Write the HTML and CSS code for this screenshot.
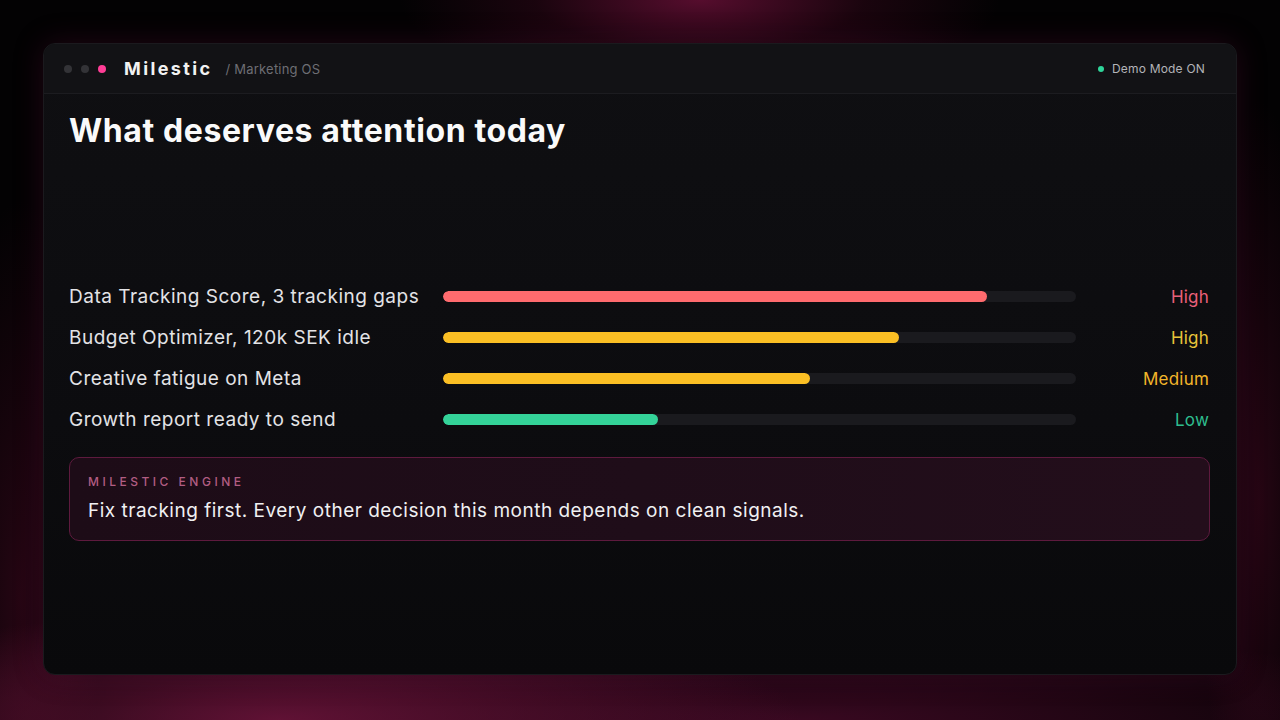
FILE: index.html
```html
<!DOCTYPE html>
<html>
<head>
<meta charset="utf-8">
<link rel="stylesheet" href="styles.css">
</head>
<body>
<div class="stage">
  <div class="window">
    <header class="topbar">
      <div class="brand">
        <div class="dots">
          <span class="dot gray"></span>
          <span class="dot gray"></span>
          <span class="dot pink"></span>
        </div>
        <span class="logo">Milestic</span>
        <span class="crumb">/ Marketing OS</span>
      </div>
      <div class="status"><span class="status-dot"></span>Demo Mode ON</div>
    </header>
    <main class="content">
      <h1 class="title">What deserves attention today</h1>
      <div class="rows">
        <div class="row">
          <span class="label">Data Tracking Score, 3 tracking gaps</span>
          <div class="track"><div class="fill red" style="width:86%"></div></div>
          <span class="level lv-red">High</span>
        </div>
        <div class="row">
          <span class="label">Budget Optimizer, 120k SEK idle</span>
          <div class="track"><div class="fill yellow" style="width:72%"></div></div>
          <span class="level lv-yellow">High</span>
        </div>
        <div class="row">
          <span class="label">Creative fatigue on Meta</span>
          <div class="track"><div class="fill yellow" style="width:58%"></div></div>
          <span class="level lv-amber">Medium</span>
        </div>
        <div class="row">
          <span class="label">Growth report ready to send</span>
          <div class="track"><div class="fill green" style="width:34%"></div></div>
          <span class="level lv-green">Low</span>
        </div>
      </div>
      <section class="engine">
        <div class="engine-label">MILESTIC ENGINE</div>
        <div class="engine-text">Fix tracking first. Every other decision this month depends on clean signals.</div>
      </section>
    </main>
  </div>
</div>
</body>
</html>
```

FILE: styles.css
```css
* { box-sizing: border-box; margin: 0; padding: 0; }
html, body { width: 1280px; height: 720px; overflow: hidden; }
body {
  background: #000;
  font-family: Inter, "Noto Sans", sans-serif;
  color: #e6e6e8;
}
.stage {
  width: 1280px;
  height: 720px;
  padding: 43px 43px 45px 43px;
  background:
    radial-gradient(ellipse 300px 90px at 700px 0px, rgba(95, 14, 50, 0.9), rgba(60, 8, 30, 0.4) 55%, transparent 100%),
    radial-gradient(ellipse 520px 110px at 280px 720px, rgba(110, 20, 60, 0.85), transparent 100%),
    radial-gradient(ellipse 700px 90px at 800px 720px, rgba(70, 10, 40, 0.8), transparent 100%),
    radial-gradient(ellipse 80px 400px at 20px 600px, rgba(60, 8, 30, 0.6), transparent 100%),
    radial-gradient(ellipse 60px 400px at 1260px 500px, rgba(60, 8, 30, 0.6), transparent 100%),
    #030203;
}
.window {
  height: 100%;
  border-radius: 12px;
  background: linear-gradient(180deg, #0f0f12 0%, #0c0c0f 60%, #09090b 100%);
  border: 1px solid #1b1a1e;
  box-shadow: 0 0 30px rgba(120, 20, 70, 0.25);
  display: flex;
  flex-direction: column;
  overflow: hidden;
}
.topbar {
  height: 50px;
  flex: none;
  display: flex;
  align-items: center;
  justify-content: space-between;
  padding: 0 31px 0 20px;
  background: #121215;
  border-bottom: 1px solid #1c1c20;
}
.brand { display: flex; align-items: center; }
.dots { display: flex; gap: 9px; align-items: center; margin-right: 18px; }
.dot { width: 8px; height: 8px; border-radius: 50%; }
.dot.gray { background: #333337; }
.dot.pink { background: #ff3d96; }
.logo {
  font-weight: 700;
  font-size: 18px;
  letter-spacing: 2.4px;
  color: #f2f2f2;
  margin-right: 13px;
}
.crumb { font-size: 13px; color: #6e6e74; letter-spacing: 0.2px; }
.status { display: flex; align-items: center; font-size: 12px; color: #b4b4b8; letter-spacing: 0.2px; }
.status-dot { width: 6px; height: 6px; border-radius: 50%; background: #2fd59a; margin-right: 8px; }

.content { padding: 19px 26px 0 25px; }
.title {
  font-size: 32px;
  font-weight: 700;
  letter-spacing: 0.6px;
  line-height: 36px;
  color: #fafafa;
}
.rows { margin-top: 127px; display: flex; flex-direction: column; }
.row {
  height: 41px;
  display: grid;
  grid-template-columns: 374px 633px 1fr;
  align-items: center;
}
.label { font-size: 19px; letter-spacing: 0.5px; color: #e3e3e6; }
.track { height: 11px; border-radius: 6px; background: #1a1a1e; overflow: hidden; }
.fill { height: 100%; border-radius: 6px; }
.fill.red { background: #ff6b6e; }
.fill.yellow { background: #fbbf24; }
.fill.green { background: #34d399; }
.level { justify-self: end; font-size: 17px; letter-spacing: 0.2px; margin-right: 1px; }
.lv-red { color: #ea6079; }
.lv-yellow { color: #e8c43a; }
.lv-amber { color: #f2b52a; }
.lv-green { color: #2ebd8e; }

.engine {
  margin-top: 17px;
  height: 84px;
  border: 1px solid #5e1a3e;
  border-radius: 10px;
  background: linear-gradient(90deg, #1d0c17 0%, #1f0d19 50%, #230e1b 100%);
  padding: 16px 18px 0 18px;
}
.engine-label {
  font-size: 12px;
  letter-spacing: 3.5px;
  color: #b25d83;
  font-weight: 500;
  line-height: 16px;
}
.engine-text {
  margin-top: 9px;
  font-size: 19px;
  letter-spacing: 0.5px;
  color: #f0f0f2;
  line-height: 24px;
}
```
